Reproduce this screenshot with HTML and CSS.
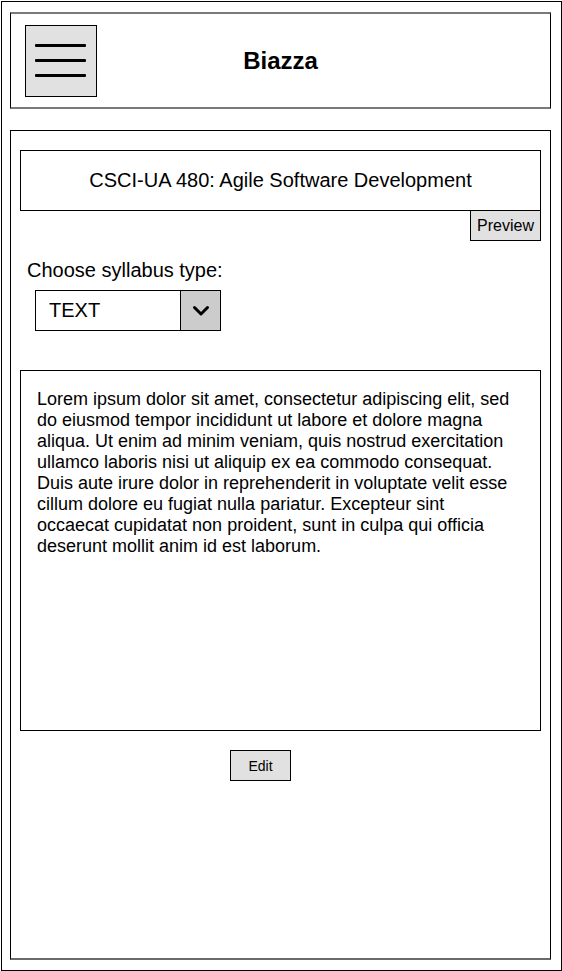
FILE: index.html
```html
<!DOCTYPE html>
<html lang="en">
<head>
<meta charset="utf-8">
<title>Biazza</title>
<link rel="stylesheet" href="styles.css">
</head>
<body>
<div class="frame">
  <header class="header">
    <div class="header-left">
      <button class="menu-btn" type="button" aria-label="Menu">
        <svg width="70" height="70" viewBox="0 0 70 70" aria-hidden="true">
          <rect x="9" y="18" width="51" height="3" rx="1" fill="#000"/>
          <rect x="9" y="33" width="51" height="3" rx="1" fill="#000"/>
          <rect x="9" y="48" width="51" height="3" rx="1" fill="#000"/>
        </svg>
      </button>
    </div>
    <h1 class="brand">Biazza</h1>
    <div class="header-right"></div>
  </header>
  <main class="main">
    <div class="course-title">CSCI-UA 480: Agile Software Development</div>
    <div class="preview-row">
      <button class="btn btn-preview" type="button">Preview</button>
    </div>
    <label class="type-label">Choose syllabus type:</label>
    <div class="select">
      <span class="select-value">TEXT</span>
      <span class="select-arrow">
        <svg width="18" height="12" viewBox="0 0 18 12" aria-hidden="true">
          <polyline points="2.5,2.5 9,9 15.5,2.5" fill="none" stroke="#000" stroke-width="3" stroke-linecap="round" stroke-linejoin="round"/>
        </svg>
      </span>
    </div>
    <div class="syllabus-text">Lorem ipsum dolor sit amet, consectetur adipiscing elit, sed do eiusmod tempor incididunt ut labore et dolore magna aliqua. Ut enim ad minim veniam, quis nostrud exercitation ullamco laboris nisi ut aliquip ex ea commodo consequat. Duis aute irure dolor in reprehenderit in voluptate velit esse cillum dolore eu fugiat nulla pariatur. Excepteur sint occaecat cupidatat non proident, sunt in culpa qui officia deserunt mollit anim id est laborum.</div>
    <button class="btn btn-edit" type="button">Edit</button>
  </main>
</div>
</body>
</html>
```

FILE: styles.css
```css
* {
  box-sizing: border-box;
}

html, body {
  margin: 0;
  padding: 0;
  background: #fff;
}

body {
  font-family: "Liberation Sans", Arial, Helvetica, sans-serif;
  color: #000;
}

.frame {
  margin: 1px 0 0 1px;
  width: 561px;
  height: 970px;
  border: 1px solid #000;
  padding: 10px 10px 0 8px;
}

.header {
  width: 541px;
  border-left: 1px solid #000;
  border-right: 1px solid #000;
  border-top: 2px solid #7a7a7a;
  border-bottom: 2px solid #7a7a7a;
  padding: 11px 0 10px 0;
  display: grid;
  grid-template-columns: 1fr auto 1fr;
  align-items: center;
}

.header-left {
  display: flex;
}

.menu-btn {
  margin: 0 0 0 14px;
  padding: 0;
  width: 72px;
  height: 72px;
  border: 1px solid #000;
  background: #e1e1e1;
  display: flex;
  align-items: center;
  justify-content: center;
}

.menu-btn svg {
  display: block;
}

.brand {
  margin: 0;
  font-size: 24px;
  font-weight: bold;
  line-height: 28px;
}

.main {
  margin-top: 21px;
  width: 541px;
  height: 830px;
  border-left: 1px solid #000;
  border-right: 1px solid #000;
  border-top: 1px solid #000;
  border-bottom: 2px solid #6a6a6a;
  padding: 19px 9px 0 9px;
  display: flex;
  flex-direction: column;
  align-items: flex-start;
}

.course-title {
  width: 521px;
  height: 61px;
  border: 1px solid #000;
  display: flex;
  align-items: center;
  justify-content: center;
  font-size: 20px;
}

.preview-row {
  width: 521px;
  display: flex;
  justify-content: flex-end;
  margin-top: -1px;
}

.btn {
  font-family: "Liberation Sans", Arial, Helvetica, sans-serif;
  color: #000;
  background: #e1e1e1;
  border: 1px solid #000;
  padding: 0;
  display: flex;
  align-items: center;
  justify-content: center;
}

.btn-preview {
  width: 71px;
  height: 31px;
  font-size: 16px;
}

.type-label {
  margin: 18px 0 0 7px;
  font-size: 20px;
  line-height: 23px;
}

.select {
  margin: 8px 0 0 15px;
  width: 186px;
  height: 41px;
  border: 1px solid #000;
  display: flex;
}

.select-value {
  flex: 1;
  display: flex;
  align-items: center;
  padding-left: 13px;
  font-size: 20px;
}

.select-arrow {
  width: 40px;
  border-left: 1px solid #000;
  background: #cccccc;
  display: flex;
  align-items: center;
  justify-content: center;
}

.select-arrow svg {
  display: block;
}

.syllabus-text {
  margin-top: 39px;
  width: 521px;
  height: 361px;
  border: 1px solid #000;
  padding: 18px 25px 0 16px;
  font-size: 18px;
  line-height: 21px;
}

.btn-edit {
  margin: 19px 0 0 210px;
  width: 61px;
  height: 31px;
  font-size: 14px;
}
```
